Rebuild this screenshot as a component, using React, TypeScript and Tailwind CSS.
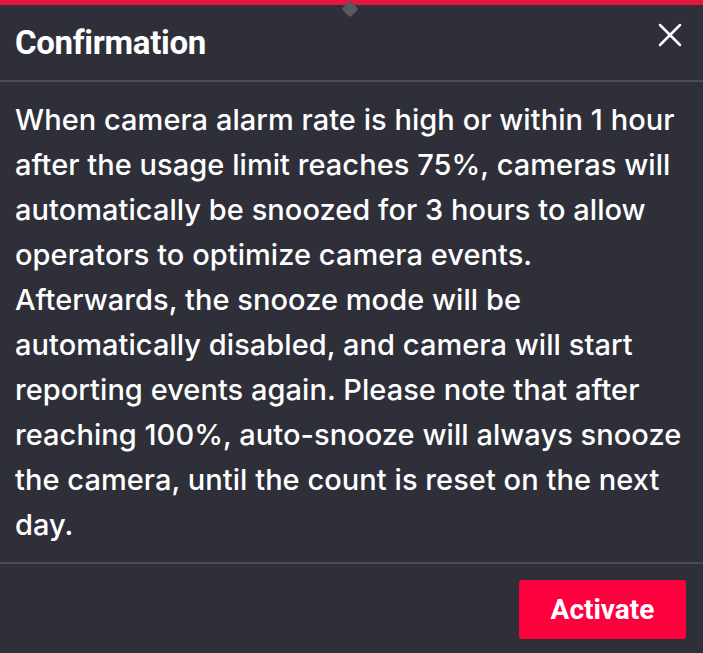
import { X } from "lucide-react";

const App = () => {
  return (
    <div className="w-[703px] h-[653px] bg-[#2e2f38] flex flex-col relative overflow-hidden" style={{ fontFamily: "Inter, 'Open Sans', sans-serif" }}>
      {/* top accent */}
      <div className="h-[5px] bg-[#e3163f] shrink-0" />
      <div className="absolute left-[344px] top-[3px] w-[12px] h-[12px] rotate-45 bg-[#58585f] rounded-[2px]" />

      {/* Header */}
      <div className="h-[77px] flex items-center justify-between pl-[15px] pr-[13px] border-b-2 border-[#4b4c55] shrink-0">
        <h2 className="text-white text-[33px] font-bold tracking-[-0.3px]" style={{ fontFamily: "Roboto, 'Liberation Sans', sans-serif" }}>
          Confirmation
        </h2>
        <X className="w-[40px] h-[40px] text-white -mt-[16px]" strokeWidth={1.5} />
      </div>

      {/* Body */}
      <div className="flex-1 pl-[15px] pr-[10px] pt-[15px]">
        <p className="text-white text-[29px] leading-[45px] font-medium tracking-[0.05px]">
          When camera alarm rate is high or within 1 hour after the usage limit reaches 75%, cameras will automatically be snoozed for 3 hours to allow operators to optimize camera events. Afterwards, the snooze mode will be automatically disabled, and camera will start reporting events again. Please note that after reaching 100%, auto-snooze will always snooze the camera, until the count is reset on the next day.
        </p>
      </div>

      {/* Footer */}
      <div className="h-[91px] border-t-2 border-[#4b4c55] flex items-start justify-end pt-[16px] pr-[17px] shrink-0">
        <button className="w-[167px] h-[59px] bg-[#ff003f] rounded-[3px] text-white text-[28px] font-bold" style={{ fontFamily: "Roboto, 'Liberation Sans', sans-serif" }}>
          Activate
        </button>
      </div>
    </div>
  );
};

export default App;
